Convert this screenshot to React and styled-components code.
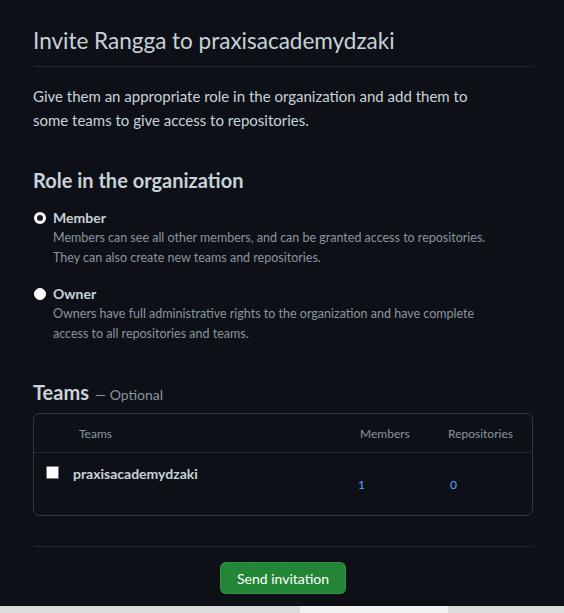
import React from "react";
import styled, { createGlobalStyle } from "styled-components";

const Global = createGlobalStyle`
  html, body { margin: 0; padding: 0; background: #0d1117; }
  body { font-family: Lato, "Noto Sans", sans-serif; color: #c9d1d9; }
`;

const Page = styled.div`
  width: 564px;
  height: 613px;
  display: flex;
  flex-direction: column;
  background: #0d1117;
  overflow: hidden;
`;

const Main = styled.div`
  flex: 1;
  padding: 24px 31px 0 33px;
  display: flex;
  flex-direction: column;
`;

const Title = styled.h1`
  margin: 0;
  font-size: 22.5px;
  font-weight: 400;
  line-height: 34px;
  color: #c9d1d9;
  padding-bottom: 8px;
  border-bottom: 1px solid #21262d;
`;

const Lead = styled.p`
  margin: 17px 0 0;
  max-width: 468px;
  font-size: 15px;
  line-height: 24px;
  color: #c9d1d9;
`;

const SectionTitle = styled.h2`
  margin: ${(p) => p.$top}px 0 0;
  font-size: 20px;
  font-weight: 700;
  line-height: 30px;
  color: #c9d1d9;
  display: flex;
  align-items: baseline;
  gap: 6px;
`;

const Optional = styled.span`
  font-size: 14px;
  font-weight: 400;
  color: #8b949e;
`;

const RoleList = styled.div`
  margin-top: 13px;
  display: flex;
  flex-direction: column;
  gap: 16px;
`;

const Role = styled.label`
  display: grid;
  grid-template-columns: 20px 440px;
`;

const Radio = styled.span`
  width: 12px;
  height: 12px;
  margin: 4px 0 0 1px;
  border-radius: 50%;
  box-sizing: border-box;
  background: ${(p) => (p.$checked ? "#161b22" : "#ffffff")};
  border: ${(p) => (p.$checked ? "3px solid #ffffff" : "1px solid #ffffff")};
`;

const RoleName = styled.span`
  font-size: 14px;
  font-weight: 700;
  line-height: 20px;
  color: #c9d1d9;
`;

const RoleDesc = styled.span`
  grid-column: 2;
  font-size: 12.5px;
  line-height: 20px;
  color: #8b949e;
`;

const TeamBox = styled.div`
  margin-top: 3px;
  border: 1px solid #30363d;
  border-radius: 6px;
  height: 103px;
  box-sizing: border-box;
`;

const HeadRow = styled.div`
  display: grid;
  grid-template-columns: 281px 88px 1fr;
  padding-left: 45px;
  height: 38px;
  align-items: center;
  border-bottom: 1px solid #21262d;
  font-size: 12px;
  color: #8b949e;
`;

const TeamRow = styled.div`
  display: grid;
  grid-template-columns: 27px 285px 92px 1fr;
  padding-left: 12px;
  height: 62px;
  align-items: center;
`;

const Check = styled.span`
  align-self: start;
  margin-top: 13px;
  width: 13px;
  height: 13px;
  box-sizing: border-box;
  background: #ffffff;
  border: 1px solid #767676;
  border-radius: 1px;
`;

const TeamName = styled.span`
  align-self: start;
  margin-top: 11px;
  font-size: 14px;
  font-weight: 700;
  line-height: 20px;
  color: #c9d1d9;
`;

const Count = styled.a`
  font-size: 12px;
  color: #58a6ff;
  text-decoration: none;
`;

const Footer = styled.div`
  margin-top: 30px;
  border-top: 1px solid #21262d;
  padding-top: 15px;
  display: flex;
  justify-content: center;
`;

const Button = styled.button`
  height: 32px;
  padding: 0 16px;
  background: #238636;
  border: 1px solid rgba(240, 246, 252, 0.1);
  border-radius: 6px;
  color: #ffffff;
  font-family: inherit;
  font-size: 14px;
  font-weight: 400;
  cursor: pointer;
`;

const Strip = styled.div`
  height: 7px;
  display: grid;
  grid-template-columns: 300px 148px 1fr;
`;

const StripPart = styled.div`
  background: ${(p) => p.$c};
`;

export default function App() {
  return (
    <Page>
      <Global />
      <Main>
        <Title>Invite Rangga to praxisacademydzaki</Title>
        <Lead>
          Give them an appropriate role in the organization and add them to some
          teams to give access to repositories.
        </Lead>

        <SectionTitle $top={33}>Role in the organization</SectionTitle>
        <RoleList>
          <Role>
            <Radio $checked />
            <RoleName>Member</RoleName>
            <RoleDesc>
              Members can see all other members, and can be granted access to
              repositories. They can also create new teams and repositories.
            </RoleDesc>
          </Role>
          <Role>
            <Radio />
            <RoleName>Owner</RoleName>
            <RoleDesc>
              Owners have full administrative rights to the organization and have
              complete access to all repositories and teams.
            </RoleDesc>
          </Role>
        </RoleList>

        <SectionTitle $top={33}>
          Teams <Optional>— Optional</Optional>
        </SectionTitle>
        <TeamBox>
          <HeadRow>
            <span>Teams</span>
            <span>Members</span>
            <span>Repositories</span>
          </HeadRow>
          <TeamRow>
            <Check />
            <TeamName>praxisacademydzaki</TeamName>
            <Count href="#">1</Count>
            <Count href="#">0</Count>
          </TeamRow>
        </TeamBox>

        <Footer>
          <Button>Send invitation</Button>
        </Footer>
      </Main>
      <Strip>
        <StripPart $c="#dcdcda" />
        <StripPart $c="#f2f2f2" />
        <StripPart $c="#dcdcda" />
      </Strip>
    </Page>
  );
}
